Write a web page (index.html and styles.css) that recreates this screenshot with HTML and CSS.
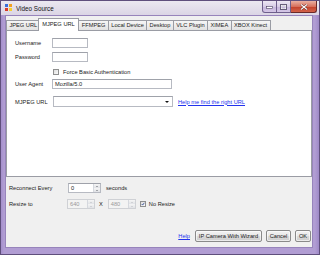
FILE: index.html
```html
<!DOCTYPE html>
<html lang="en">
<head>
    <meta charset="UTF-8">
    <title>Video Source</title>
    <link rel="stylesheet" href="styles.css">
</head>
<body>
    <div class="window">
        <div class="titlebar">
            <svg class="app-icon" width="7" height="7" viewBox="0 0 7 7">
                <rect x="0" y="0" width="3" height="3" fill="#3a6fd8"/>
                <rect x="4" y="0" width="3" height="3" fill="#f2a020"/>
                <rect x="0" y="4" width="3" height="3" fill="#d83a2a"/>
                <rect x="4" y="4" width="3" height="3" fill="#f4d030"/>
            </svg>
            <span class="title">Video Source</span>
            <div class="caption-buttons">
                <div class="cap cap-min">
                    <svg width="7" height="4" viewBox="0 0 7 4"><rect x="0.5" y="1.5" width="6" height="2" fill="#fff" stroke="#4a4060" stroke-width="0.6"/></svg>
                </div>
                <div class="cap cap-max">
                    <svg width="7" height="6" viewBox="0 0 7 6"><rect x="0.8" y="0.8" width="5.4" height="4.4" fill="none" stroke="#4a4060" stroke-width="1.4"/><rect x="1.3" y="1.3" width="4.4" height="3.4" fill="none" stroke="#fff" stroke-width="0.8"/></svg>
                </div>
                <div class="cap cap-close">
                    <svg width="8" height="6" viewBox="0 0 8 6"><path d="M1 0.5 L7 5.5 M7 0.5 L1 5.5" stroke="#5a2020" stroke-width="2"/><path d="M1 0.5 L7 5.5 M7 0.5 L1 5.5" stroke="#fff" stroke-width="1.1"/></svg>
                </div>
            </div>
        </div>

        <div class="client">
            <div class="tabs">
                <div class="tab">JPEG URL</div>
                <div class="tab active">MJPEG URL</div>
                <div class="tab">FFMPEG</div>
                <div class="tab">Local Device</div>
                <div class="tab">Desktop</div>
                <div class="tab">VLC Plugin</div>
                <div class="tab">XIMEA</div>
                <div class="tab">XBOX Kinect</div>
            </div>

            <div class="tab-page">
                <div class="row row-user">
                    <span class="lbl">Username</span>
                    <div class="textbox tb-short"></div>
                </div>
                <div class="row row-pass">
                    <span class="lbl">Password</span>
                    <div class="textbox tb-short"></div>
                </div>
                <div class="row row-check">
                    <span class="lbl"></span>
                    <div class="checkbox"></div>
                    <span class="check-text">Force Basic Authentication</span>
                </div>
                <div class="row row-agent">
                    <span class="lbl">User Agent</span>
                    <div class="textbox tb-long">Mozilla/5.0</div>
                </div>
                <div class="row row-url">
                    <span class="lbl">MJPEG URL</span>
                    <div class="combo">
                        <span class="combo-arrow"></span>
                    </div>
                    <a class="link help-url">Help me find the right URL</a>
                </div>
            </div>

            <div class="options">
                <div class="opt-row row-reconnect">
                    <span class="opt-lbl">Reconnect Every</span>
                    <div class="spin spin-reconnect">
                        <span class="spin-val">0</span>
                        <div class="spin-btns">
                            <span class="spin-up"></span>
                            <span class="spin-down"></span>
                        </div>
                    </div>
                    <span class="unit">seconds</span>
                </div>
                <div class="opt-row row-resize">
                    <span class="opt-lbl">Resize to</span>
                    <div class="spin spin-size disabled">
                        <span class="spin-val">640</span>
                        <div class="spin-btns">
                            <span class="spin-up"></span>
                            <span class="spin-down"></span>
                        </div>
                    </div>
                    <span class="times">X</span>
                    <div class="spin spin-size disabled">
                        <span class="spin-val">480</span>
                        <div class="spin-btns">
                            <span class="spin-up"></span>
                            <span class="spin-down"></span>
                        </div>
                    </div>
                    <div class="checkbox checked">
                        <svg width="6" height="6" viewBox="0 0 6 6"><path d="M1 3 L2.5 4.6 L5 1.2" fill="none" stroke="#24408a" stroke-width="1.2"/></svg>
                    </div>
                    <span class="check-text">No Resize</span>
                </div>
            </div>

            <div class="buttons">
                <a class="link help">Help</a>
                <div class="btn btn-wizard">IP Camera With Wizard</div>
                <div class="btn btn-cancel">Cancel</div>
                <div class="btn btn-ok">OK</div>
            </div>
        </div>
    </div>
</body>
</html>
```

FILE: styles.css
```css
:root {
    --frame-color: #b19dd3;
    --frame-dark: #5f4f7c;
    --client-bg: #f0f0f0;
    --border-color: #a9abb2;
    --text-color: #222;
    --link-color: #2233ee;
}
* {
    box-sizing: border-box;
}
body {
    margin: 0;
    font-family: "Liberation Sans", Arial, sans-serif;
    font-size: 5.7px;
    color: var(--text-color);
    background-color: #fff;
}
.window {
    width: 320px;
    height: 255px;
    display: flex;
    flex-direction: column;
    border: 1px solid var(--frame-dark);
    background: linear-gradient(90deg, #a48fcb 0, var(--frame-color) 3px, var(--frame-color) 314px, #9e89c7 318px);
}
.titlebar {
    height: 14px;
    display: flex;
    align-items: flex-start;
    padding: 0 2px 0 4px;
    background: linear-gradient(#ebe8f0, #dbd5e5);
}
.app-icon {
    margin-top: 3px;
}
.title {
    margin: 4px 0 0 4px;
    font-size: 6.3px;
    color: #111;
}
.caption-buttons {
    margin-left: auto;
    display: flex;
    height: 12px;
}
.cap {
    display: flex;
    align-items: center;
    justify-content: center;
    height: 12px;
    border: 1px solid #6e5f8c;
    border-top: none;
    background: linear-gradient(#eee8f4 0%, #d8cde6 50%, #c6b6dc 51%, #d4c6e6 100%);
}
.cap-min {
    width: 15px;
    border-radius: 0 0 0 3px;
}
.cap-max {
    width: 14px;
    border-left: none;
}
.cap-close {
    width: 26px;
    border-left: none;
    border-color: #6a2a28;
    border-radius: 0 0 3px 0;
    background: linear-gradient(#eab0a2 0%, #d8705c 50%, #c23f2a 51%, #d2624a 100%);
}
.client {
    flex: 1;
    margin: 0 6px 6px 4px;
    border: 1px solid #9784bb;
    background-color: var(--client-bg);
    display: flex;
    flex-direction: column;
}
.tabs {
    display: flex;
    align-items: flex-end;
    height: 14px;
    padding-top: 2px;
    position: relative;
    z-index: 1;
}
.tab {
    height: 10px;
    line-height: 9px;
    padding: 0 2.4px;
    border: 1px solid #9a9ca4;
    border-bottom: none;
    margin-right: -1px;
    background: linear-gradient(#f6f6f6, #e2e2e2);
    white-space: nowrap;
}
.tab.active {
    height: 13px;
    margin: 0 -1px -1px -2px;
    padding: 0 3.6px;
    line-height: 11px;
    background: #fff;
    position: relative;
}
.tab-page {
    height: 147px;
    background: #fff;
    border: 1px solid #9a9ca4;
    padding: 7px 0 0 8px;
}
.row {
    display: flex;
    align-items: center;
}
.row-user { height: 10px; }
.row-pass { height: 10px; margin-top: 4px; }
.row-check { height: 11px; margin-top: 4px; }
.row-agent { height: 10px; margin-top: 2px; }
.row-url { height: 11px; margin-top: 7px; }
.lbl {
    width: 37px;
    flex-shrink: 0;
}
.textbox {
    height: 100%;
    border: 1px solid #b7bac2;
    border-top-color: #9fa2aa;
    background: #fff;
    padding-left: 2px;
    line-height: 8px;
}
.tb-short { width: 36px; }
.tb-long { width: 120px; }
.checkbox {
    width: 6px;
    height: 6px;
    flex-shrink: 0;
    border: 1px solid #8e8f8f;
    background: linear-gradient(135deg, #dcdcdc, #fbfbfb);
    display: flex;
    align-items: center;
    justify-content: center;
}
.checkbox svg {
    display: block;
}
.row-check .checkbox {
    margin-left: 1px;
}
.check-text {
    margin-left: 4px;
}
.combo {
    width: 120px;
    height: 100%;
    margin-left: 1px;
    border: 1px solid #b7bac2;
    border-top-color: #9fa2aa;
    background: #fff;
    display: flex;
    align-items: center;
    justify-content: flex-end;
    padding-right: 3px;
}
.combo-arrow {
    width: 0;
    height: 0;
    border-left: 2px solid transparent;
    border-right: 2px solid transparent;
    border-top: 2px solid #111;
}
.link {
    color: var(--link-color);
    text-decoration: underline;
}
.help-url {
    margin-left: 5px;
}
.options {
    padding-left: 3px;
}
.opt-row {
    display: flex;
    align-items: center;
    height: 10px;
    margin-top: 6px;
}
.opt-lbl {
    width: 59px;
    flex-shrink: 0;
}
.spin {
    height: 100%;
    display: flex;
    border: 1px solid #b7bac2;
    border-top-color: #9fa2aa;
    background: #fff;
}
.spin-reconnect { width: 33px; }
.spin-size { width: 28px; }
.row-resize .opt-lbl { width: 58px; }
.spin-val {
    flex: 1;
    padding-left: 2px;
    line-height: 8px;
}
.spin-btns {
    width: 7px;
    display: flex;
    flex-direction: column;
    border-left: 1px solid #d5d8de;
}
.spin-up,
.spin-down {
    flex: 1;
    display: flex;
    align-items: center;
    justify-content: center;
    background: linear-gradient(#f5f5f5, #e0e2e6);
}
.spin-up::after,
.spin-down::after {
    content: "";
    border-left: 1.5px solid transparent;
    border-right: 1.5px solid transparent;
}
.spin-up::after { border-bottom: 1.5px solid #5a5e66; }
.spin-down::after { border-top: 1.5px solid #5a5e66; }
.spin.disabled {
    background: #f3f3f3;
    border-color: #cfd1d5;
    color: #9a9a9a;
}
.spin.disabled .spin-up::after { border-bottom-color: #b8bac0; }
.spin.disabled .spin-down::after { border-top-color: #b8bac0; }
.unit {
    margin-left: 5px;
}
.times {
    margin: 0 5px 0 4px;
}
.row-resize .checkbox {
    margin-left: 4px;
}
.row-resize .check-text {
    margin-left: 3px;
}
.buttons {
    display: flex;
    justify-content: flex-end;
    align-items: center;
    height: 12px;
    margin-top: 21px;
    padding-right: 1px;
}
.help {
    margin-right: 5px;
}
.btn {
    height: 12px;
    line-height: 10px;
    text-align: center;
    border: 1px solid #8a8a8a;
    border-radius: 2px;
    background: linear-gradient(#f2f2f2 0%, #e8e8e8 50%, #dadada 51%, #cdcdcd 100%);
    box-shadow: inset 0 0 0 1px rgba(255, 255, 255, 0.6);
    margin-left: 4px;
}
.btn-wizard { width: 67px; margin-left: 0; }
.btn-cancel { width: 25px; }
.btn-ok { width: 16px; }
```
